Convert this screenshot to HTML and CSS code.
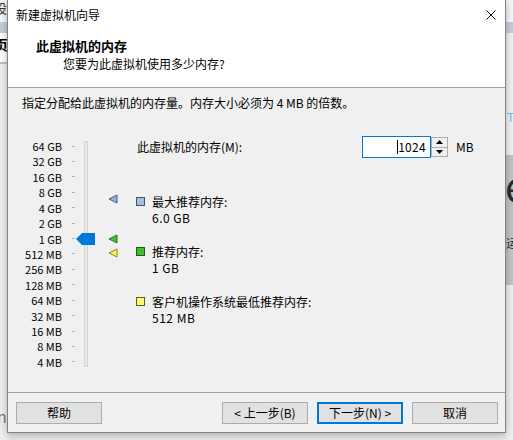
FILE: index.html
```html
<!DOCTYPE html>
<html lang="zh-CN">
<head>
<meta charset="utf-8">
<title>新建虚拟机向导</title>
<link rel="stylesheet" href="styles.css">
</head>
<body>
<div class="bg-left">
  <div class="bl-top"><span class="bl-char">设</span></div>
  <div class="bl-band"></div>
  <div class="bl-white"><span class="bl-char2">页</span></div>
  <div class="bl-line"></div>
  <div class="bl-rest"><span class="bl-n">n</span></div>
</div>
<div class="bg-right">
  <div class="br-top"></div>
  <div class="br-band"></div>
  <div class="br-white"><span class="br-t">T</span></div>
  <div class="br-dark"><span class="br-e">e</span><span class="br-yun">运</span></div>
  <div class="br-rest"></div>
</div>

<div class="dialog">
  <div class="titlebar">
    <span class="title">新建虚拟机向导</span>
    <svg class="close" width="10" height="10" viewBox="0 0 10 10"><path d="M0.5 0.5 L9.5 9.5 M9.5 0.5 L0.5 9.5" stroke="#000" stroke-width="1" fill="none"/></svg>
  </div>
  <div class="header">
    <div class="h-title">此虚拟机的内存</div>
    <div class="h-sub">您要为此虚拟机使用多少内存?</div>
  </div>
  <div class="content">
    <p class="intro">指定分配给此虚拟机的内存量。内存大小必须为 4 MB 的倍数。</p>
    <div class="main">
      <div class="slider">
        <div class="scale">
          <div class="row"><span class="lbl">64 GB</span><span class="tick"></span></div>
          <div class="row"><span class="lbl">32 GB</span><span class="tick"></span></div>
          <div class="row"><span class="lbl">16 GB</span><span class="tick"></span></div>
          <div class="row"><span class="lbl">8 GB</span><span class="tick"></span></div>
          <div class="row"><span class="lbl">4 GB</span><span class="tick"></span></div>
          <div class="row"><span class="lbl">2 GB</span><span class="tick"></span></div>
          <div class="row"><span class="lbl">1 GB</span><span class="tick"></span></div>
          <div class="row"><span class="lbl">512 MB</span><span class="tick"></span></div>
          <div class="row"><span class="lbl">256 MB</span><span class="tick"></span></div>
          <div class="row"><span class="lbl">128 MB</span><span class="tick"></span></div>
          <div class="row"><span class="lbl">64 MB</span><span class="tick"></span></div>
          <div class="row"><span class="lbl">32 MB</span><span class="tick"></span></div>
          <div class="row"><span class="lbl">16 MB</span><span class="tick"></span></div>
          <div class="row"><span class="lbl">8 MB</span><span class="tick"></span></div>
          <div class="row"><span class="lbl">4 MB</span><span class="tick"></span></div>
        </div>
        <div class="track"></div>
        <svg class="thumb" width="19" height="12" viewBox="0 0 19 12"><polygon points="0,6 6,0 19,0 19,12 6,12" fill="#0078d7"/></svg>
        <svg class="marker m-max" width="10" height="10" viewBox="0 0 10 10"><polygon points="1,5 9,1 9,9" fill="#9db3d8" stroke="#3d5a8c" stroke-width="1"/></svg>
        <svg class="marker m-rec" width="10" height="10" viewBox="0 0 10 10"><polygon points="1,5 9,1 9,9" fill="#46c046" stroke="#1e7a1e" stroke-width="1"/></svg>
        <svg class="marker m-min" width="10" height="10" viewBox="0 0 10 10"><polygon points="1,5 9,1 9,9" fill="#fbf15a" stroke="#8a8420" stroke-width="1"/></svg>
      </div>
      <div class="right">
        <div class="memrow">
          <span class="memlabel">此虚拟机的内存(M):</span>
          <div class="input"><span class="caret"></span><span class="val">1024</span></div>
          <div class="spin">
            <div class="spin-btn"><svg width="7" height="4" viewBox="0 0 7 4"><polygon points="0,4 3.5,0 7,4" fill="#000"/></svg></div>
            <div class="spin-btn"><svg width="7" height="4" viewBox="0 0 7 4"><polygon points="0,0 7,0 3.5,4" fill="#000"/></svg></div>
          </div>
          <span class="mb">MB</span>
        </div>
        <div class="legend">
          <div class="item">
            <span class="sq sq-max"></span>
            <div class="itext"><div>最大推荐内存:</div><div class="num">6.0 GB</div></div>
          </div>
          <div class="item">
            <span class="sq sq-rec"></span>
            <div class="itext"><div>推荐内存:</div><div class="num">1 GB</div></div>
          </div>
          <div class="item">
            <span class="sq sq-min"></span>
            <div class="itext"><div>客户机操作系统最低推荐内存:</div><div class="num">512 MB</div></div>
          </div>
        </div>
      </div>
    </div>
  </div>
  <div class="footer">
    <button class="btn">帮助</button>
    <div class="spacer"></div>
    <div class="nav">
      <button class="btn">&lt; 上一步(B)</button>
      <button class="btn btn-default">下一步(N) &gt;</button>
      <button class="btn">取消</button>
    </div>
  </div>
</div>
</body>
</html>
```

FILE: styles.css
```css
* { box-sizing: border-box; }

body {
  margin: 0;
  width: 513px;
  height: 440px;
  overflow: hidden;
  position: relative;
  background: #e9eaeb;
  font-family: "Noto Sans CJK SC", sans-serif;
  font-size: 12px;
  color: #000;
}

/* background windows on the desktop */
.bg-left {
  position: absolute;
  left: 0;
  top: 0;
  width: 7px;
  height: 440px;
  overflow: hidden;
  display: flex;
  flex-direction: column;
}
.bl-top { height: 22px; background: #f7f7f7; position: relative; overflow: hidden; }
.bl-char { position: absolute; left: -6px; top: 0; font-size: 13px; line-height: 16px; color: #333; }
.bl-band { height: 11px; background: #c6ced8; }
.bl-white { height: 29px; background: #fff; position: relative; overflow: hidden; }
.bl-char2 { position: absolute; left: -6px; top: 2px; font-size: 14px; font-weight: bold; line-height: 18px; }
.bl-line { height: 2px; background: #b8c4d0; }
.bl-rest { flex: 1; background: #f0f0f0; position: relative; overflow: hidden; }
.bl-n { position: absolute; left: -3px; top: 343px; font-size: 16px; line-height: 18px; color: #777; }

.bg-right {
  position: absolute;
  left: 506px;
  top: 0;
  width: 7px;
  height: 440px;
  overflow: hidden;
  display: flex;
  flex-direction: column;
}
.br-top { height: 22px; background: #f7f7f7; }
.br-band { height: 11px; background: #c6ced8; }
.br-white { height: 122px; background: #f2f2f2; position: relative; }
.br-t { position: absolute; left: 1px; top: 77px; font-size: 12px; line-height: 14px; color: #7ab8d8; }
.br-dark { height: 130px; background: #c4c4c4; position: relative; overflow: hidden; }
.br-e { position: absolute; left: -1px; top: 8px; font-size: 40px; line-height: 44px; color: #2a2a2a; }
.br-yun { position: absolute; left: 0; top: 81px; font-size: 12px; line-height: 14px; color: #333; }
.br-rest { flex: 1; background: linear-gradient(to bottom, #f0f0f0 0, #f0f0f0 235px, #9aa0a6 250px); }

/* dialog window */
.dialog {
  position: absolute;
  left: 7px;
  top: -1px;
  width: 499px;
  height: 434px;
  border: 1px solid #838383;
  background: #f0f0f0;
  display: flex;
  flex-direction: column;
  box-shadow: 0 2px 8px rgba(0, 0, 0, 0.28);
}

.titlebar {
  height: 30px;
  background: #fff;
  display: flex;
  align-items: center;
  justify-content: space-between;
  padding: 0 9px 0 8px;
}
.title { line-height: 16px; }
.close { display: block; }

.header {
  height: 58px;
  background: #fff;
  border-bottom: 1px solid #a0a0a0;
  padding-top: 8px;
}
.h-title {
  padding-left: 28px;
  font-weight: bold;
  font-size: 13px;
  line-height: 16px;
}
.h-sub {
  padding-left: 55px;
  margin-top: 2px;
  line-height: 16px;
}

.content {
  flex: 1;
  padding-top: 7px;
}
.intro {
  margin: 0;
  padding-left: 14px;
  line-height: 16px;
}

.main {
  display: flex;
  margin-top: 25px;
}

.slider {
  position: relative;
  width: 128px;
  height: 240px;
  display: flex;
  align-items: flex-start;
}
.scale {
  margin-top: 2.3px;
  display: grid;
  grid-template-rows: repeat(15, 15.43px);
}
.row {
  display: flex;
  align-items: center;
}
.lbl {
  width: 54px;
  text-align: right;
  font-size: 11px;
  line-height: 14px;
  white-space: nowrap;
}
.tick {
  margin-left: 10px;
  width: 3px;
  height: 1px;
  background: #b4b4b4;
}
.track {
  margin-left: 9px;
  margin-top: 5px;
  width: 4px;
  height: 226px;
  background: #e7e9e9;
  border: 1px solid #d4d6d6;
}
.thumb {
  position: absolute;
  left: 68px;
  top: 97px;
}
.marker {
  position: absolute;
  left: 100px;
}
.m-max { top: 58px; }
.m-rec { top: 98px; }
.m-min { top: 112px; }

.right {
  flex: 1;
}
.memrow {
  display: flex;
  align-items: center;
  height: 22px;
}
.memlabel {
  width: 226px;
  padding-left: 1px;
  line-height: 16px;
}
.input {
  width: 69px;
  height: 22px;
  border: 1px solid #0078d7;
  background: #fff;
  display: flex;
  align-items: center;
  justify-content: flex-end;
  padding-right: 4px;
}
.caret {
  width: 1px;
  height: 14px;
  background: #000;
}
.val {
  line-height: 16px;
  letter-spacing: 0.3px;
}
.spin {
  width: 17px;
  height: 22px;
  display: flex;
  flex-direction: column;
  padding: 1px 0;
}
.spin-btn {
  flex: 1;
  border: 1px solid #adadad;
  background: #f0f0f0;
  display: flex;
  align-items: center;
  justify-content: center;
}
.spin-btn + .spin-btn { border-top: none; }
.spin-btn svg { display: block; }
.mb {
  margin-left: 8px;
  line-height: 16px;
}

.legend {
  margin-top: 36px;
  display: flex;
  flex-direction: column;
  gap: 18px;
}
.item {
  display: flex;
  align-items: flex-start;
}
.sq {
  width: 9px;
  height: 9px;
  margin-top: 3px;
  border: 1px solid #333;
}
.sq-max { background: #a9bddb; border-color: #3e5577; }
.sq-rec { background: #3fbf2f; border-color: #1e5e14; }
.sq-min { background: #fbfb78; border-color: #5e5e20; }
.itext {
  margin-left: 7px;
  line-height: 16px;
}
.num { letter-spacing: 0.5px; }

.footer {
  height: 40px;
  border-top: 1px solid #a0a0a0;
  padding: 9px 7px 0 8px;
  display: flex;
  align-items: flex-start;
}
.spacer { flex: 1; }
.nav {
  display: flex;
  gap: 9px;
}
.btn {
  width: 86px;
  height: 22px;
  margin: 0;
  padding: 0;
  background: #e1e1e1;
  border: 1px solid #adadad;
  font-family: "Noto Sans CJK SC", sans-serif;
  font-size: 12px;
  line-height: 16px;
  color: #000;
}
.btn-default {
  border: 2px solid #0078d7;
}
```
